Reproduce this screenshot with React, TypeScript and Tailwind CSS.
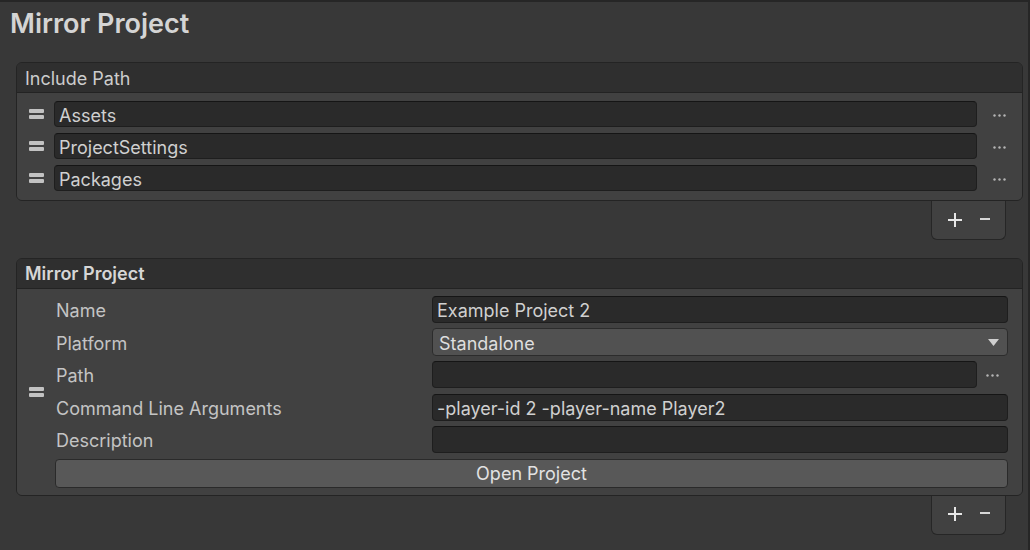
const font = { fontFamily: 'Inter, "Noto Sans", sans-serif' }

function Handle() {
  return (
    <div className="flex w-[15px] flex-col gap-[2px]">
      <div className="h-[4px] rounded-[1px] bg-[#c2c2c2]" />
      <div className="h-[4px] rounded-[1px] bg-[#c2c2c2]" />
    </div>
  )
}

function Dots() {
  return (
    <svg width="13" height="3" viewBox="0 0 13 3">
      <circle cx="1.5" cy="1.5" r="1.2" fill="#b4b4b4" />
      <circle cx="6.5" cy="1.5" r="1.2" fill="#b4b4b4" />
      <circle cx="11.5" cy="1.5" r="1.2" fill="#b4b4b4" />
    </svg>
  )
}

function Field({ value, className = '' }: { value?: string; className?: string }) {
  return (
    <div
      className={`flex items-center rounded-[4px] border border-[#1e1e1e] border-t-[#151515] bg-[#2a2a2a] px-[4px] pt-[3px] text-[18px] leading-none text-[#d0d0d0] ${className}`}
    >
      {value}
    </div>
  )
}

function Footer() {
  return (
    <div className="flex justify-end pr-[22px]">
      <div className="flex h-[39px] w-[75px] items-center justify-center gap-[18px] rounded-b-[6px] border-x border-b border-[#262626] bg-[#414141] pb-[1px]">
        <svg width="14" height="14" viewBox="0 0 14 14">
          <rect x="0" y="6" width="14" height="2" fill="#e6e6e6" />
          <rect x="6" y="0" width="2" height="14" fill="#e6e6e6" />
        </svg>
        <svg width="10" height="14" viewBox="0 0 10 14">
          <rect x="0" y="5" width="10" height="2" fill="#d6d6d6" />
        </svg>
      </div>
    </div>
  )
}

const paths = ['Assets', 'ProjectSettings', 'Packages']

const rows: { label: string; value: string; kind: 'field' | 'dropdown' | 'path' }[] = [
  { label: 'Name', value: 'Example Project 2', kind: 'field' },
  { label: 'Platform', value: 'Standalone', kind: 'dropdown' },
  { label: 'Path', value: '', kind: 'path' },
  { label: 'Command Line Arguments', value: '-player-id 2 -player-name Player2', kind: 'field' },
  { label: 'Description', value: '', kind: 'field' },
]

export default function App() {
  return (
    <div className="h-[550px] w-[1030px] overflow-hidden border-t-2 border-r-2 border-[#262626] bg-[#383838] text-[#d2d2d2]" style={font}>
      <div className="h-[60px] pl-[10px] pt-[5px] text-[27px] font-semibold leading-[34px] text-[#d4d4d4]">
        Mirror Project
      </div>

      <div className="ml-[16px] w-[1007px] overflow-hidden rounded-[6px] border border-[#242424]">
        <div className="flex h-[30px] items-center border-b border-[#232323] bg-[#2f2f2f] px-[8px] pt-[2px] text-[18px] text-[#cccccc]">
          Include Path
        </div>
        <div className="flex flex-col gap-[6px] bg-[#414141] pt-[8px] pb-[9px]">
          {paths.map((p) => (
            <div key={p} className="flex h-[26px] items-center">
              <div className="flex w-[37px] shrink-0 justify-start pl-[12px]">
                <Handle />
              </div>
              <Field value={p} className="h-[26px] w-[923px]" />
              <div className="flex flex-1 justify-center pt-[2px]">
                <Dots />
              </div>
            </div>
          ))}
        </div>
      </div>
      <Footer />

      <div className="mt-[18px] ml-[16px] w-[1007px] overflow-hidden rounded-[6px] border border-[#242424]">
        <div className="flex h-[30px] items-center border-b border-[#232323] bg-[#2f2f2f] px-[8px] text-[18px] font-semibold text-[#d6d6d6]">
          Mirror Project
        </div>
        <div className="flex bg-[#414141] pt-[7px] pb-[7px] pr-[14px]">
          <div className="flex w-[38px] shrink-0 items-center pl-[12px]">
            <Handle />
          </div>
          <div className="flex flex-1 flex-col gap-[5.5px]">
            {rows.map((r) => (
              <div key={r.label} className="flex h-[27px] items-center">
                <div className="w-[377px] shrink-0 pl-[1px] pt-[3px] text-[18px] leading-none text-[#c4c4c4]">{r.label}</div>
                {r.kind === 'field' && <Field value={r.value} className="h-[27px] flex-1" />}
                {r.kind === 'dropdown' && (
                  <div className="flex h-[28px] flex-1 items-center justify-between rounded-[4px] border border-[#2c2c2c] bg-[#515151] pl-[6px] pr-[8px] text-[18px] leading-none text-[#dedede]">
                    <span className="pt-[3px]">{r.value}</span>
                    <svg width="11" height="7" viewBox="0 0 11 7">
                      <path d="M0 0 H11 L5.5 7 Z" fill="#cfcfcf" />
                    </svg>
                  </div>
                )}
                {r.kind === 'path' && (
                  <>
                    <Field value={r.value} className="h-[27px] w-[545px]" />
                    <div className="flex flex-1 justify-center pt-[2px]">
                      <Dots />
                    </div>
                  </>
                )}
              </div>
            ))}
            <div className="flex h-[29px] items-center justify-center rounded-[4px] border border-[#2a2a2a] bg-[#585858] pt-[2px] text-[18px] leading-none text-[#e2e2e2]">
              Open Project
            </div>
          </div>
        </div>
      </div>
      <Footer />
    </div>
  )
}
